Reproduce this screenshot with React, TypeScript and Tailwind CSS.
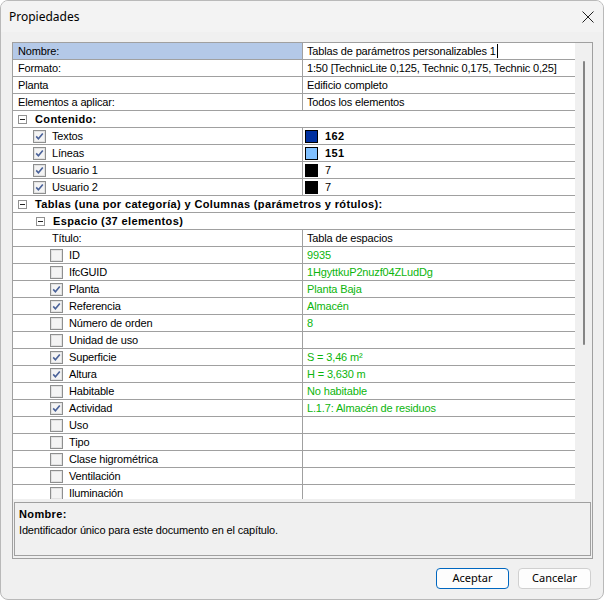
import React from "react";

const F = { fontFamily: '"Liberation Sans", Arial, sans-serif', letterSpacing: "-0.15px" };
const B = { letterSpacing: "0.36px" };

function Check({ on }: { on: boolean }) {
  return (
    <svg width="13" height="13" viewBox="0 0 13 13" className="shrink-0">
      <rect x="0.5" y="0.5" width="12" height="12" fill="#f4f4f4" stroke="#8e8f8f" />
      <rect x="1.5" y="1.5" width="10" height="10" fill="none" stroke="#e2e2e2" />
      {on && (
        <path d="M3.2 6.4 L5.4 8.8 L9.8 3.4" fill="none" stroke="#4a6299" strokeWidth="1.6" />
      )}
    </svg>
  );
}

function Minus() {
  return (
    <svg width="9" height="9" viewBox="0 0 9 9" className="shrink-0">
      <rect x="0.5" y="0.5" width="8" height="8" fill="#ffffff" stroke="#919191" />
      <path d="M2 4.5 H7" stroke="#222" strokeWidth="1" />
    </svg>
  );
}

function Swatch({ color }: { color: string }) {
  return <span className="inline-block w-[13px] h-[13px] border border-black shrink-0" style={{ background: color }} />;
}

function PropRow({
  name,
  value,
  selected,
  cursor,
  pad = 5,
}: {
  name: string;
  value: string;
  selected?: boolean;
  cursor?: boolean;
  pad?: number;
}) {
  return (
    <div className="flex h-[17px] border-b border-[#a0a0a0]">
      <div
        className={`w-[289px] flex items-center ${selected ? "bg-[#b4c9e8]" : ""}`}
        style={{ paddingLeft: pad }}
      >
        {name}
      </div>
      <div className="w-px bg-[#a0a0a0]" />
      <div className="flex-1 pl-[4px] flex items-center">
        {value}
        {cursor && <span className="inline-block w-px h-[14px] bg-black ml-[1px]" />}
      </div>
    </div>
  );
}

function CatRow({ label, indent }: { label: string; indent: number }) {
  return (
    <div className="flex h-[17px] border-b border-[#a0a0a0] items-center font-bold" style={{ paddingLeft: indent }}>
      <Minus />
      <span className="ml-[8px]" style={B}>
        {label}
      </span>
    </div>
  );
}

function ColorRow({ label, color, num, bold }: { label: string; color: string; num: string; bold?: boolean }) {
  return (
    <div className="flex h-[17px] border-b border-[#a0a0a0]">
      <div className="w-[289px] pl-[20px] flex items-center">
        <Check on />
        <span className="ml-[6px]">{label}</span>
      </div>
      <div className="w-px bg-[#a0a0a0]" />
      <div className="flex-1 pl-[2px] flex items-center">
        <Swatch color={color} />
        <span className={`ml-[7px] ${bold ? "font-bold" : ""}`} style={bold ? B : undefined}>
          {num}
        </span>
      </div>
    </div>
  );
}

function ItemRow({ label, on, value }: { label: string; on: boolean; value?: string }) {
  return (
    <div className="flex h-[17px] border-b border-[#a0a0a0]">
      <div className="w-[289px] pl-[37px] flex items-center">
        <Check on={on} />
        <span className="ml-[6px]">{label}</span>
      </div>
      <div className="w-px bg-[#a0a0a0]" />
      <div className="flex-1 pl-[4px] flex items-center text-[#0cb50c]">{value}</div>
    </div>
  );
}

const items: { label: string; on: boolean; value?: string }[] = [
  { label: "ID", on: false, value: "9935" },
  { label: "IfcGUID", on: false, value: "1HgyttkuP2nuzf04ZLudDg" },
  { label: "Planta", on: true, value: "Planta Baja" },
  { label: "Referencia", on: true, value: "Almacén" },
  { label: "Número de orden", on: false, value: "8" },
  { label: "Unidad de uso", on: false },
  { label: "Superficie", on: true, value: "S = 3,46 m²" },
  { label: "Altura", on: true, value: "H = 3,630 m" },
  { label: "Habitable", on: false, value: "No habitable" },
  { label: "Actividad", on: true, value: "L.1.7: Almacén de residuos" },
  { label: "Uso", on: false },
  { label: "Tipo", on: false },
  { label: "Clase higrométrica", on: false },
  { label: "Ventilación", on: false },
  { label: "Iluminación", on: false },
];

export default function App() {
  return (
    <div className="w-[604px] h-[601px] bg-white overflow-hidden">
      <div className="w-[604px] h-[600px] rounded-[8px] border border-[#b9b9b9] bg-[#f0f0f0] overflow-hidden flex flex-col">
        <div
          className="h-[31px] flex items-center justify-between pl-[8px] pr-[9px] bg-[#f3f3f3] text-[12px] text-black"
          style={{ fontFamily: '"Noto Sans", "Open Sans", sans-serif' }}
        >
          <span>Propiedades</span>
          <svg width="12" height="12" viewBox="0 0 12 12">
            <path d="M0.5 0.5 L11.5 11.5 M11.5 0.5 L0.5 11.5" stroke="#222" strokeWidth="1" />
          </svg>
        </div>
        <div className="pl-[11px] pt-[10px]">
          <div className="w-[581px] h-[517px] border border-[#a0a0a0] flex flex-col text-[11px] text-black" style={F}>
            <div className="h-[456px] bg-white flex overflow-hidden">
              <div className="w-[562px] flex flex-col overflow-hidden">
                <PropRow name="Nombre:" value="Tablas de parámetros personalizables 1" selected cursor />
                <PropRow name="Formato:" value="1:50 [TechnicLite 0,125, Technic 0,175, Technic 0,25]" />
                <PropRow name="Planta" value="Edificio completo" />
                <PropRow name="Elementos a aplicar:" value="Todos los elementos" />
                <CatRow label="Contenido:" indent={5} />
                <ColorRow label="Textos" color="#0030a0" num="162" bold />
                <ColorRow label="Líneas" color="#80c0ff" num="151" bold />
                <ColorRow label="Usuario 1" color="#000000" num="7" />
                <ColorRow label="Usuario 2" color="#000000" num="7" />
                <CatRow label="Tablas (una por categoría) y Columnas (parámetros y rótulos):" indent={5} />
                <CatRow label="Espacio (37 elementos)" indent={23} />
                <PropRow name="Título:" value="Tabla de espacios" pad={39} />
                {items.map((it) => (
                  <ItemRow key={it.label} {...it} />
                ))}
              </div>
              <div className="flex-1 bg-[#f0f0f0] flex justify-center pt-[18px]">
                <div className="w-[2px] h-[284px] bg-[#858585] rounded-full" />
              </div>
            </div>
            <div className="flex-1 px-[1px] pt-[3px] pb-[2px]">
              <div className="h-full border border-[#a0a0a0] px-[4px] pt-[4px]">
                <div className="font-bold leading-[15px]" style={B}>
                  Nombre:
                </div>
                <div className="leading-[16px]">Identificador único para este documento en el capítulo.</div>
              </div>
            </div>
          </div>
        </div>
        <div
          className="flex justify-end gap-[9px] pr-[12px] pt-[9px] text-[11px] text-black"
          style={{ fontFamily: '"Noto Sans", "Open Sans", sans-serif' }}
        >
          <button className="w-[73px] h-[21px] rounded-[4px] border border-[#0067c0] bg-[#fdfdfd] flex items-center justify-center">
            Aceptar
          </button>
          <button className="w-[73px] h-[21px] rounded-[4px] border border-[#d0d0d0] bg-[#fdfdfd] flex items-center justify-center">
            Cancelar
          </button>
        </div>
      </div>
    </div>
  );
}
